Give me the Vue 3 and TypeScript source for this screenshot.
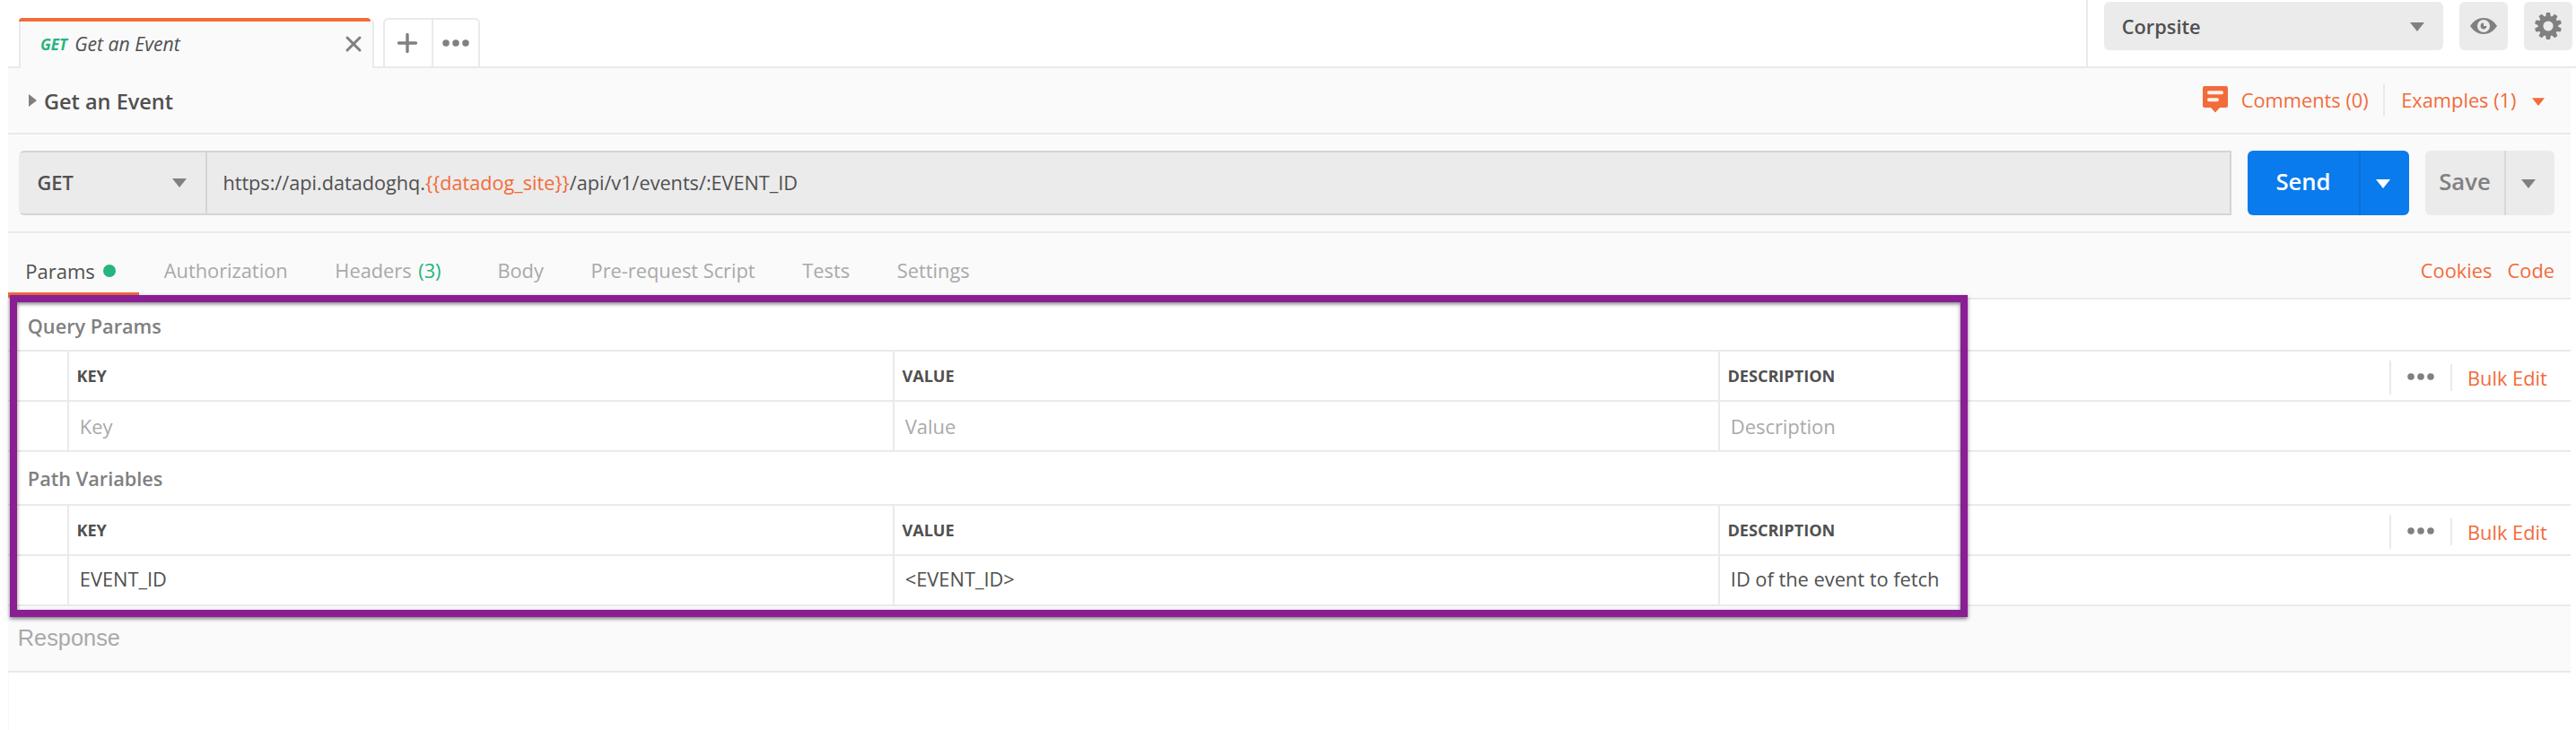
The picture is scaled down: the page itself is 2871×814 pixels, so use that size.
<script setup lang="ts">
interface Tab { label: string; count?: string; dot?: boolean; active?: boolean }
interface Section { title: string; values: string[]; filled: boolean }

const tabs: Tab[] = [
  { label: 'Params', dot: true, active: true },
  { label: 'Authorization' },
  { label: 'Headers', count: '(3)' },
  { label: 'Body' },
  { label: 'Pre-request Script' },
  { label: 'Tests' },
  { label: 'Settings' },
]
const columns = ['KEY', 'VALUE', 'DESCRIPTION']
const sections: Section[] = [
  { title: 'Query Params', values: ['Key', 'Value', 'Description'], filled: false },
  { title: 'Path Variables', values: ['EVENT_ID', '<EVENT_ID>', 'ID of the event to fetch'], filled: true },
]
const gearTeeth = Array.from({ length: 10 }, (_, i) => i * 36)
</script>

<template>
  <div class="app">
    <header class="topbar">
      <div class="tab-active">
        <span class="tab-method">GET</span>
        <span class="tab-name">Get an Event</span>
        <svg class="close" width="20" height="20" viewBox="0 0 20 20"><path d="M3 3L17 17M17 3L3 17" /></svg>
      </div>
      <div class="tab-tools">
        <svg width="52" height="52" viewBox="0 0 52 52"><path class="plus" d="M15.5 26H34.5M25 16.5V35.5" /></svg>
        <svg class="more" width="52" height="52" viewBox="0 0 52 52"><circle cx="14.6" cy="26" r="3.9" /><circle cx="26" cy="26" r="3.9" /><circle cx="37.4" cy="26" r="3.9" /></svg>
      </div>
      <div class="environment">
        <div class="env-select">
          <span>Corpsite</span>
          <svg class="caret" width="16" height="10" viewBox="0 0 16 10"><path d="M0 0H16L8 10Z" /></svg>
        </div>
        <div class="icon-button">
          <svg width="32" height="20" viewBox="0 0 32 20">
            <path fill="#808080" d="M1 10C5 4 10 1 16 1S27 4 31 10C27 16 22 19 16 19S5 16 1 10Z" />
            <circle cx="16" cy="10" r="7" fill="#ebebeb" />
            <path fill="#808080" d="M16 6.6A3.4 3.4 0 1 0 19.4 10H16.8L16 9.2Z" />
          </svg>
        </div>
        <div class="icon-button">
          <svg width="32" height="32" viewBox="-16 -16 32 32">
            <path v-for="angle in gearTeeth" :key="angle" fill="#808080" d="M-3 -10L-2 -15H2L3 -10Z" :transform="`rotate(${angle})`" />
            <circle r="8.4" fill="none" stroke="#808080" stroke-width="5.6" />
          </svg>
        </div>
      </div>
    </header>

    <main class="workspace">
      <section class="request-head">
        <svg class="disclosure" width="9" height="14" viewBox="0 0 9 14"><path d="M0 0L9 7L0 14Z" /></svg>
        <h1>Get an Event</h1>
        <div class="head-links">
          <svg class="comment-icon" width="28" height="30" viewBox="0 0 28 30">
            <path fill="#f26b3a" d="M2 0H26Q28 0 28 2V22Q28 24 26 24H19L14 29.5L9 24H2Q0 24 0 22V2Q0 0 2 0Z" />
            <path fill="none" stroke="#fff0ea" stroke-width="4" stroke-linecap="round" d="M7 7.3H21M7 15.2H16" />
          </svg>
          <a class="comments">Comments (0)</a>
          <a class="examples">Examples (1)</a>
          <svg class="caret orange" width="14" height="9" viewBox="0 0 16 10"><path d="M0 0H16L8 10Z" /></svg>
        </div>
      </section>

      <section class="url-row">
        <div class="url-bar">
          <div class="method"><span>GET</span><svg class="caret" width="16" height="10" viewBox="0 0 16 10"><path d="M0 0H16L8 10Z" /></svg></div>
          <div class="url"><span>https://api.datadoghq.</span><span class="variable" v-text="'{{datadog_site}}'"></span><span>/api/v1/events/:EVENT_ID</span></div>
        </div>
        <div class="split send"><span class="label">Send</span><span class="drop"><svg class="caret" width="16" height="10" viewBox="0 0 16 10"><path d="M0 0H16L8 10Z" /></svg></span></div>
        <div class="split save"><span class="label">Save</span><span class="drop"><svg class="caret" width="16" height="10" viewBox="0 0 16 10"><path d="M0 0H16L8 10Z" /></svg></span></div>
      </section>

      <nav class="request-tabs">
        <div v-for="tab in tabs" :key="tab.label" class="request-tab" :class="{ active: tab.active, counted: tab.count }">
          <span>{{ tab.label }}</span><span v-if="tab.count" class="count">{{ tab.count }}</span><i v-if="tab.dot" class="dot"></i>
        </div>
        <div class="tab-links"><a>Cookies</a><a>Code</a></div>
      </nav>

      <section v-for="section in sections" :key="section.title" class="params" :class="{ filled: section.filled }">
        <h2>{{ section.title }}</h2>
        <div class="row head">
          <div></div>
          <div v-for="column in columns" :key="column" class="cell">
            <span>{{ column }}</span>
          </div>
          <div class="row-tools">
            <svg class="row-more" width="68" height="38" viewBox="0 0 68 38"><circle cx="22.7" cy="18" r="3.9" /><circle cx="34" cy="18" r="3.9" /><circle cx="45.3" cy="18" r="3.9" /></svg>
            <a><span>Bulk Edit</span></a>
          </div>
        </div>
        <div class="row body">
          <div></div>
          <div v-for="value in section.values" :key="value" class="cell"><span>{{ value }}</span></div>
        </div>
      </section>

      <section class="response">Response</section>
      <div class="highlight"></div>
    </main>
  </div>
</template>

<style>
body { background: #fff; overflow: hidden; }
</style>

<style scoped>
* { box-sizing: border-box; }
.app {
  width: 2871px;
  height: 814px;
  background: #fff;
  color: #505050;
  font-family: "Open Sans", "Noto Sans", sans-serif;
  font-size: 21.8px;
  line-height: 30px;
  white-space: nowrap;
}
svg { display: block; flex: none; }
.caret, .disclosure { fill: #808080; }
.caret.orange { fill: #f26b3a; margin-top: 2px; }
a { color: #f26b3a; }

.topbar { display: flex; height: 76px; margin-left: 9px; padding-left: 12px; align-items: flex-end; background: linear-gradient(#eaeaea, #eaeaea) bottom / 100% 2px no-repeat; }
.tab-active { position: relative; display: flex; align-items: center; width: 396px; height: 56px; padding: 1px 12px 0 22px; border: solid #eaeaea; border-width: 0 2px; border-radius: 5px 6px 0 0; background: #fafafa; }
.tab-active::before { content: ""; position: absolute; left: -2px; top: 0; width: 392px; height: 4px; border-radius: 4px 4px 0 0; background: #f26b3a; }
.tab-method { padding-top: 2px; color: #26b47f; font-size: 17.1px; font-weight: 700; font-style: italic; }
.tab-name { margin-left: 8px; font-size: 21.2px; font-style: italic; }
.close { margin-left: auto; margin-right: -1px; fill: none; stroke: #808080; stroke-width: 3; stroke-linecap: round; }
.tab-tools { display: flex; width: 108px; height: 54px; margin: 0 0 2px 10px; border: 2px solid #eaeaea; border-bottom: 0; border-radius: 6px 6px 0 0; }
.plus { stroke: #808080; stroke-width: 3.4; stroke-linecap: round; }
.more { width: 52px; border-left: 2px solid #eaeaea; fill: #808080; }
.environment { display: flex; gap: 18px; width: 546px; height: 74px; margin: 0 0 2px auto; padding: 2px 0 0 18px; border-left: 2px solid #eaeaea; }
.env-select { display: flex; align-items: center; justify-content: space-between; width: 378px; height: 54px; padding: 1px 21px 0 19.7px; border-radius: 6px; background: #ebebeb; font-weight: 600; }
.icon-button { display: grid; place-items: center; width: 54px; height: 54px; border-radius: 6px; background: #ebebeb; }

.workspace { position: relative; width: 2856px; height: 738px; margin-left: 9px; border-left: 1px solid #f8f8f8; }
.workspace > section, .request-tabs { margin-left: -1px; }
.request-head { display: flex; align-items: center; height: 74px; padding: 0 29px 0 23px; border-bottom: 2px solid #eaeaea; background: #fafafa; }
h1 { margin: 2px 0 0 8px; font-size: 23.5px; font-weight: 600; line-height: 30px; }
.head-links { display: flex; align-items: center; margin-left: auto; }
.comment-icon { margin-top: -3px; }
.comments { padding: 3px 16px 3px 15px; border-right: 2px solid #eaeaea; }
.examples { margin: 0 17.5px 0 18.5px; }

.url-row { display: flex; height: 110px; padding: 18px 18px 0 12px; border-bottom: 2px solid #eaeaea; background: #fafafa; }
.url-bar { display: flex; width: 2466px; height: 72px; border: 2px solid #d4d4d4; border-left-color: #ebebeb; border-radius: 6px 0 0 6px; background: #ebebeb; }
.method { display: flex; align-items: center; justify-content: space-between; width: 208px; padding: 0 21px 0 18.5px; border-right: 2px solid #d4d4d4; font-weight: 600; }
.url { display: flex; align-items: center; padding-left: 17.4px; font-size: 21.67px; }
.variable { color: #f26b3a; }
.split { display: flex; height: 72px; margin-left: 18px; border-radius: 6px; font-size: 25.7px; font-weight: 600; }
.split .label { display: grid; place-items: center; padding-bottom: 3px; }
.split .drop { display: grid; place-items: center; width: 56px; padding: 1px 4px 0 0; border-left: 2px solid #d8d8d8; }
.send { width: 180px; background: #097bed; color: #fff; }
.send .label { width: 124px; }
.send .drop { border-color: #0a6fd8; }
.send .caret { fill: #fff; }
.save { width: 144px; background: #ebebeb; color: #808080; }
.save .label { width: 88px; }

.request-tabs { display: flex; height: 74px; padding-right: 18px; border-bottom: 2px solid #eaeaea; background: #fafafa; color: #a9a9a9; }
.request-tab { display: flex; align-items: center; height: 72px; padding: 12px 26.35px 0; }
.request-tab.counted { padding-right: 36.5px; }
.request-tab.active { width: 146px; margin-right: 1.4px; padding: 18px 0 0 19.3px; border-bottom: 6px solid #f26b3a; color: #505050; font-size: 22px; }
.count { margin-left: 7.6px; color: #26b47f; }
.dot { width: 14px; height: 14px; margin-left: 9.4px; border-radius: 50%; background: #26b47f; }
.tab-links { display: flex; gap: 17.2px; margin-left: auto; padding-top: 27px; }

.params h2 { height: 56px; margin: 0; padding: 15px 0 0 21.8px; color: #808080; font-size: 21.7px; font-weight: 600; }
.params.filled h2 { height: 58px; }
.row { display: grid; grid-template-columns: 66px 920px 920px 1fr; height: 56px; border-top: 2px solid #eaeaea; }
.params .row.body { height: 58px; border-bottom: 2px solid #eaeaea; }
.row .cell { display: flex; align-items: center; border-left: 2px solid #eaeaea; }
.head { grid-template-columns: 66px 920px 920px 1fr 202px; }
.head .cell { padding: 0 0 0 8.4px; font-size: 18.1px; font-weight: 700; }
.body .cell { padding: 1px 0 0 11.8px; color: #a9a9a9; font-size: 21.9px; }
.filled .body .cell { color: #505050; padding-top: 0; padding-bottom: 2px; font-size: 21.8px; }
.row-tools { display: flex; align-items: center; padding-top: 4px; }
.row-more { height: 38px; border-left: 2px solid #eaeaea; fill: #808080; }
.row-tools a { height: 30px; padding: 1px 0 0 17px; border-left: 2px solid #eaeaea; }

.response { height: 74px; padding: 20px 0 0 10.8px; border-bottom: 2px solid #eaeaea; background: #fafafa; color: #a9a9a9; font-family: "Liberation Sans", Arial, sans-serif; font-size: 25.35px; }

/* Callout frame drawn over both parameter tables */
.highlight { position: absolute; left: 1px; top: 253px; width: 2182px; height: 359px; border: 8px solid #8a1e94; filter: drop-shadow(0 2px 2px rgba(0, 0, 0, 0.5)); }
</style>
